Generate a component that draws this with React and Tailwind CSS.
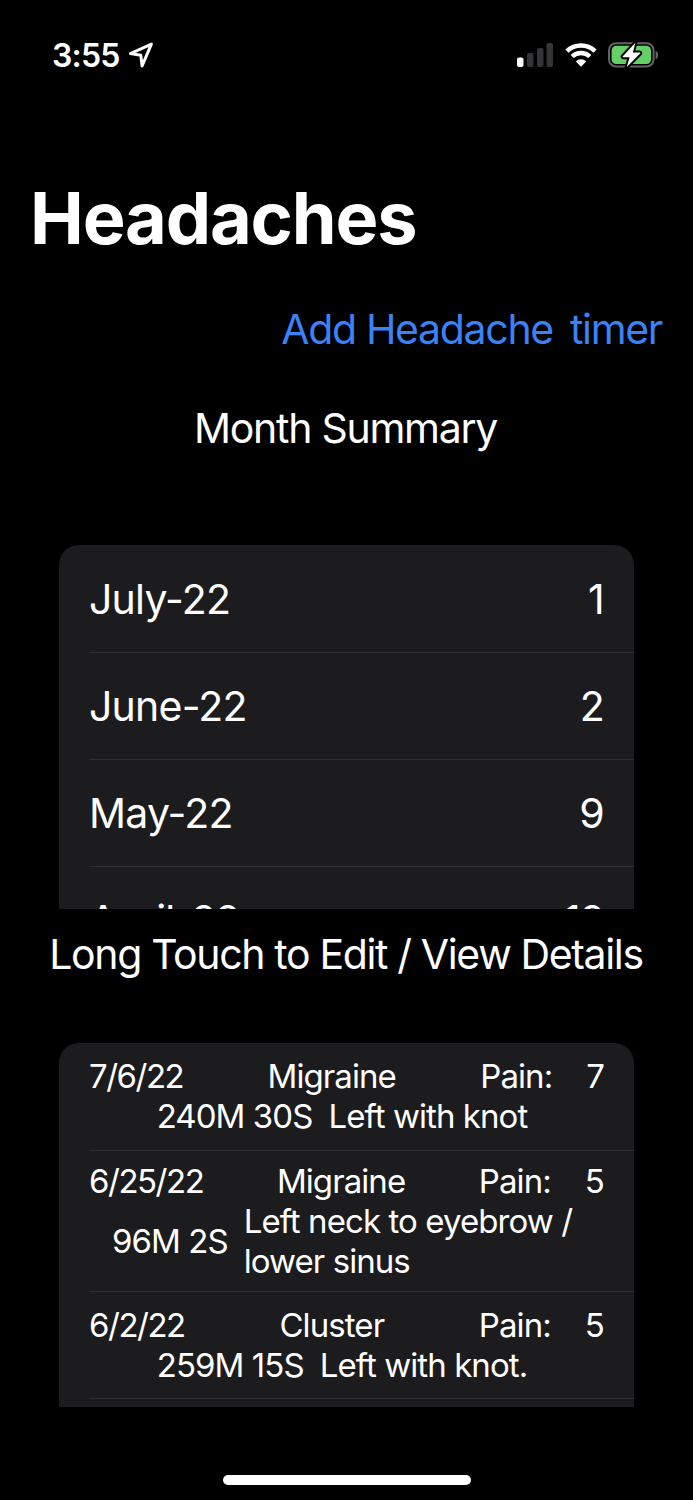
const months = [
  { name: "July-22", count: 1 },
  { name: "June-22", count: 2 },
  { name: "May-22", count: 9 },
  { name: "April-22", count: 12 },
];

const entries = [
  {
    date: "7/6/22",
    type: "Migraine",
    pain: 7,
    duration: "240M 30S",
    note: ["Left with knot"],
    height: "h-[107px]",
  },
  {
    date: "6/25/22",
    type: "Migraine",
    pain: 5,
    duration: "96M 2S",
    note: ["Left neck to eyebrow /", "lower sinus"],
    height: "h-[141px]",
  },
  {
    date: "6/2/22",
    type: "Cluster",
    pain: 5,
    duration: "259M 15S",
    note: ["Left with knot."],
    height: "h-[107px]",
  },
];

const StatusBar = () => (
  <div className="h-[110px] pl-[52px] pr-[34px] pt-[35px] flex items-start justify-between">
    <div className="h-10 flex items-center">
      <span className="pt-px text-[32px] font-semibold tracking-[-0.025em]">3:55</span>
      <svg className="ml-2 w-[26px] h-[26px]" viewBox="0 0 26 26" fill="none">
        <path
          d="M23.4 2.2 L2.4 11.6 L12.8 13.2 L14.1 24 Z"
          stroke="white"
          strokeWidth="3"
          strokeLinejoin="round"
        />
      </svg>
    </div>
    <div className="h-10 flex items-center">
      <svg className="w-9 h-6" viewBox="0 0 36 24">
        <rect x="0" y="14.5" width="6.5" height="9.5" rx="2" fill="white" />
        <rect x="10" y="10" width="6.5" height="14" rx="2" fill="#353537" />
        <rect x="20" y="5" width="6.5" height="19" rx="2" fill="#353537" />
        <rect x="29.5" y="0" width="6.5" height="24" rx="2" fill="#353537" />
      </svg>
      <svg className="ml-3 w-8 h-6" viewBox="0 0 32 24" fill="none">
        <path d="M1.9 8.2 A20.3 20.3 0 0 1 30.1 8.2" stroke="white" strokeWidth="4.6" />
        <path d="M7.2 13.5 A12.7 12.7 0 0 1 24.8 13.5" stroke="white" strokeWidth="4.4" />
        <path d="M16 23.7 L10.8 18.5 A7.4 7.4 0 0 1 21.2 18.5 Z" fill="white" />
      </svg>
      <svg className="ml-[11px] w-[51px] h-[26px]" viewBox="0 0 51 26">
        <rect x="1" y="1.2" width="44.6" height="23.4" rx="7.2" fill="none" stroke="#636365" strokeWidth="2" />
        <path d="M47.6 8.7 C51 10 51 16 47.6 17.3 Z" fill="#636365" />
        <rect x="3.6" y="3.8" width="39.4" height="18.2" rx="4.6" fill="#65cf68" />
        <path
          d="M27.3 0.8 L14.7 14.4 Q14.4 15.2 15.4 15.2 H21.6 L18.8 25 L32.1 11.6 Q32.6 10.7 31.5 10.6 H24.9 Z"
          fill="white"
          stroke="black"
          strokeWidth="4"
          paintOrder="stroke"
          strokeLinejoin="round"
        />
      </svg>
    </div>
  </div>
);

const MonthRow = ({ month }) => (
  <div className="ml-[30px] pr-[30px] h-[107px] shrink-0 pt-[2px] flex items-center justify-between border-t border-[#303032] first:border-transparent text-[41px] tracking-[-0.019em]">
    <span>{month.name}</span>
    <span>{month.count}</span>
  </div>
);

const EntryRow = ({ entry }) => (
  <div
    className={`ml-[30px] pr-[30px] ${entry.height} shrink-0 first:pb-[2px] flex flex-col justify-center border-t border-[#303032] first:border-transparent text-[33px] leading-10 tracking-[-0.028em]`}
  >
    <div className="flex justify-between">
      <span className="tracking-[-0.045em]">{entry.date}</span>
      <span>{entry.type}</span>
      <span className="flex gap-[34px]">
        <span>Pain:</span>
        <span>{entry.pain}</span>
      </span>
    </div>
    <div className="pr-[9px] flex items-center justify-center gap-4">
      <span>{entry.duration}</span>
      <div>
        {entry.note.map((line) => (
          <p key={line} className="whitespace-nowrap">
            {line}
          </p>
        ))}
      </div>
    </div>
  </div>
);

const App = () => {
  return (
    <div className="w-[693px] h-[1500px] overflow-hidden bg-black text-white font-['Inter','Liberation_Sans',sans-serif] flex flex-col">
      <StatusBar />

      <h1 className="mt-[63px] ml-[30px] h-[90px] leading-[90px] text-[72px] font-bold tracking-[-0.016em]">
        Headaches
      </h1>

      <div className="mt-[41px] pr-[31px] h-[50px] flex items-center justify-end gap-[17px] text-[41px] leading-[50px] tracking-[-0.032em] text-[#3a82f7]">
        <button>Add Headache</button>
        <button>timer</button>
      </div>

      <h2 className="mt-[49px] pr-[2px] h-[50px] text-center text-[41px] leading-[50px] tracking-[-0.031em]">
        Month Summary
      </h2>

      <div className="mt-[92px] ml-[59px] w-[575px] h-[364px] shrink-0 overflow-hidden rounded-t-[20px] bg-[#1c1c1e] flex flex-col">
        {months.map((month) => (
          <MonthRow key={month.name} month={month} />
        ))}
      </div>

      <h2 className="mt-5 pr-px h-[50px] text-center whitespace-nowrap text-[41px] leading-[50px] tracking-[-0.033em]">
        Long Touch to Edit / View Details
      </h2>

      <div className="mt-16 ml-[59px] w-[575px] h-[364px] shrink-0 overflow-hidden rounded-t-[20px] bg-[#1c1c1e] flex flex-col">
        {entries.map((entry) => (
          <EntryRow key={entry.date} entry={entry} />
        ))}
        {/* divider above the next, scrolled-off entry */}
        <div className="ml-[30px] shrink-0 border-t border-[#303032]" />
      </div>

      <div className="mt-[68px] mx-auto w-[248px] h-[10px] shrink-0 rounded-full bg-white" />
    </div>
  );
};

export default App;
